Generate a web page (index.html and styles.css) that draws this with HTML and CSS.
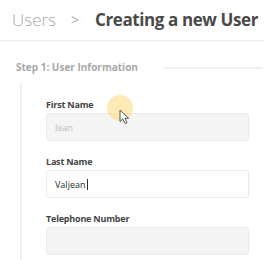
FILE: index.html
```
<!DOCTYPE html>
<html lang="en">
<head>
    <meta charset="UTF-8">
    <meta name="viewport" content="width=device-width, initial-scale=1.0">
    <title>Creating a new User</title>
    <link rel="stylesheet" href="styles.css">
</head>
<body>
    <div class="header">
        <span class="crumb">Users</span>
        <span class="sep">&gt;</span>
        <span class="title">Creating a new User</span>
    </div>

    <div class="step">
        <div class="legend">
            <span>Step 1: User Information</span>
            <div class="rule"></div>
        </div>
        <div class="fields">
            <div class="field">
                <label>First Name</label>
                <input type="text" class="input disabled" placeholder="Jean" disabled>
            </div>
            <div class="field">
                <label>Last Name</label>
                <div class="input typed">Valjean<span class="caret"></span></div>
            </div>
            <div class="field">
                <label>Telephone Number</label>
                <input type="text" class="input disabled" disabled>
            </div>
        </div>
    </div>

    <!-- mouse highlight -->
    <div class="pointer">
        <div class="halo"></div>
        <svg class="arrow" width="12" height="16" viewBox="0 0 12 16">
            <path d="M1 1 L1 12.5 L3.8 10 L6 14.6 L8 13.7 L5.9 9.3 L9.6 9.3 Z" fill="#fff" stroke="#555" stroke-width="1" stroke-linejoin="round"/>
        </svg>
    </div>
</body>
</html>
```
FILE: styles.css
```
body { margin: 0; font-family: "Open Sans", "Noto Sans", sans-serif; background: #fff; color: #444; width: 264px; height: 260px; overflow: hidden; position: relative; }
.header { height: 40px; border-bottom: 2px solid #f2f2f2; display: flex; align-items: center; padding-left: 12px; font-size: 17px; line-height: 20px; }
.crumb { color: #a9a9a9; font-weight: 300; }
.sep { color: #b0b0b0; margin-left: 15px; font-size: 14px; }
.title { color: #4a4a4a; font-weight: 700; margin-left: 16px; letter-spacing: -0.4px; white-space: nowrap; }
.step { padding: 18px 1px 0 16px; }
.legend { display: flex; align-items: center; font-size: 10px; font-weight: 700; color: #a8a8a8; line-height: 14px; }
.rule { flex: 1; height: 2px; background: #f0f0f0; margin-left: 26px; margin-top: 1px; }
.fields { margin: 8px 0 0 4px; border-left: 2px solid #f2f2f2; padding: 17px 15px 6px 24px; }
.field { margin-bottom: 15px; }
.field:last-child { margin-bottom: 0; }
.field label { display: block; font-size: 9px; font-weight: 700; color: #444; line-height: 12px; margin-bottom: 2px; letter-spacing: -0.2px; }
.input { box-sizing: border-box; display: block; width: 203px; height: 28px; border: 1px solid #ebebeb; border-radius: 2px; padding: 0 8px; font-family: inherit; font-size: 9px; color: #333; background: #fff; }
.input.disabled { background: #f5f5f5; }
.input::placeholder { color: #bdbdbd; }
.typed { display: flex; align-items: center; color: #2e2e2e; }
.caret { display: inline-block; width: 1px; height: 11px; background: #333; margin-left: 1px; }
.pointer { position: absolute; left: 107px; top: 95px; width: 26px; height: 26px; }
.halo { width: 26px; height: 26px; border-radius: 50%; background: rgba(252, 220, 130, 0.6); }
.arrow { position: absolute; left: 12px; top: 14px; }
```
